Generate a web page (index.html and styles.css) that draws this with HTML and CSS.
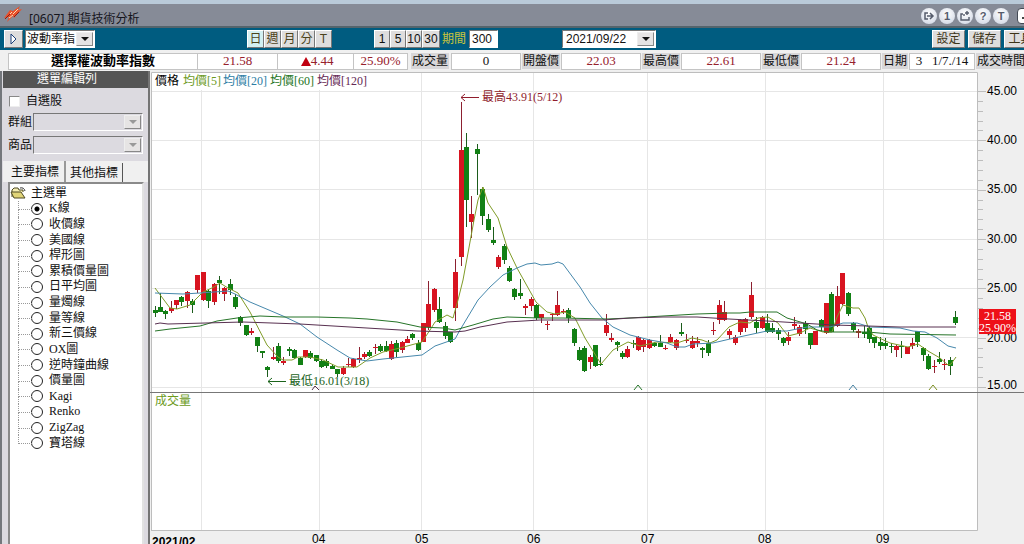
FILE: index.html
```html
<!DOCTYPE html>
<html lang="zh-Hant">
<head>
<meta charset="utf-8">
<title>[0607] 期貨技術分析</title>
<link rel="stylesheet" href="styles.css">
</head>
<body>
<header class="titlebar">
  <svg class="logo" viewBox="0 0 18 16" width="18" height="16" aria-hidden="true">
    <path d="M0 12 6 4 9 5 16 0 14 4 18 3 10 12 9 10 3 16 5 11Z" fill="#e8512c"/>
    <path d="M4 10 8 6M9 8 14 3M5 12 9 9" stroke="#ffd9b0" stroke-width="1" fill="none"/>
    <path d="M1 13 6 8M10 11 15 6" stroke="#8c1c14" stroke-width="1" fill="none"/>
  </svg>
  <h1 class="title">[0607] 期貨技術分析</h1>
  <div class="window-tools">
    <button class="orb" aria-label="匯出"><svg viewBox="0 0 16 16" width="16" height="16"><path d="M7 5H4V11H7M6 8H12M9 5 12 8 9 11" fill="none" stroke="#555c6c" stroke-width="1.5"/></svg></button>
    <button class="orb">1</button>
    <button class="orb" aria-label="新視窗"><svg viewBox="0 0 16 16" width="16" height="16"><path d="M6 6H4V12H12V9M7 6V8M10 3V7M8 5H12" fill="none" stroke="#555c6c" stroke-width="1.4"/></svg></button>
    <button class="orb">?</button>
    <button class="orb">T</button>
    <button class="minimize" aria-label="最小化"><svg viewBox="0 0 14 14" width="14" height="14"><path d="M2 9H9" stroke="#444" stroke-width="2"/></svg></button>
  </div>
</header>

<nav class="toolbar">
  <button class="key play" aria-label="展開"><svg viewBox="0 0 10 12" width="10" height="12"><path d="M2 1 7 6 2 11Z" fill="#fff" stroke="#1c3f78"/></svg></button>
  <span class="combo combo-product"><select aria-label="商品"><option>波動率指</option></select></span>
  <div class="keys periods">
    <button class="key active">日</button><button class="key">週</button><button class="key">月</button><button class="key">分</button><button class="key">T</button>
  </div>
  <div class="keys minutes">
    <button class="key">1</button><button class="key">5</button><button class="key">10</button><button class="key">30</button>
  </div>
  <label class="span-label" for="span">期間</label>
  <input class="span-input" id="span" type="text" value="300">
  <span class="combo combo-date"><select aria-label="日期"><option>2021/09/22</option></select></span>
  <div class="actions">
    <button class="key wide">設定</button><button class="key wide">儲存</button><button class="key wide">工具</button>
  </div>
</nav>

<section class="quote">
  <strong class="cell name">選擇權波動率指數</strong>
  <span class="cell price">21.58</span>
  <span class="cell change"><svg viewBox="0 0 10 9" width="10" height="9" aria-hidden="true"><path d="M5 0 10 9H0Z" fill="#c00010"/></svg>4.44</span>
  <span class="cell percent">25.90%</span>
  <span class="tag first">成交量</span><span class="cell volume">0</span>
  <span class="tag">開盤價</span><span class="cell value">22.03</span>
  <span class="tag">最高價</span><span class="cell value">22.61</span>
  <span class="tag">最低價</span><span class="cell value">21.24</span>
  <span class="tag short">日期</span><span class="cell date">3&nbsp;&nbsp; 1/7./14</span>
  <span class="tag long">成交時間</span>
</section>

<main class="workspace">
  <aside class="sidebar">
    <h2 class="side-title">選單編輯列</h2>
    <div class="filters">
      <label class="check"><input type="checkbox">自選股</label>
      <div class="field"><label for="group">群組</label><span class="combo off"><select id="group" disabled></select></span></div>
      <div class="field"><label for="item">商品</label><span class="combo off"><select id="item" disabled></select></span></div>
    </div>
    <div class="tabs" role="tablist">
      <button class="tab selected" role="tab" aria-selected="true">主要指標</button>
      <button class="tab" role="tab" aria-selected="false">其他指標</button>
    </div>
    <div class="tree">
      <div class="root">
        <svg viewBox="0 0 16 12" width="16" height="12" aria-hidden="true"><path d="M2 10V3L4 1H8L9 3H13V5" fill="#f4edb0" stroke="#4e4a25"/><path d="M1 5H11L15 11H4Z" fill="#e0d478" stroke="#4e4a25"/><path d="M10 1Q14 0 15 4" fill="none" stroke="#333"/></svg>
        主選單
      </div>
      <ul class="items">
        <li><label><input type="radio" name="chart" checked>K線</label></li>
        <li><label><input type="radio" name="chart">收價線</label></li>
        <li><label><input type="radio" name="chart">美國線</label></li>
        <li><label><input type="radio" name="chart">桿形圖</label></li>
        <li><label><input type="radio" name="chart">累積價量圖</label></li>
        <li><label><input type="radio" name="chart">日平均圖</label></li>
        <li><label><input type="radio" name="chart">量燭線</label></li>
        <li><label><input type="radio" name="chart">量等線</label></li>
        <li><label><input type="radio" name="chart">新三價線</label></li>
        <li><label><input type="radio" name="chart">OX圖</label></li>
        <li><label><input type="radio" name="chart">逆時鐘曲線</label></li>
        <li><label><input type="radio" name="chart">價量圖</label></li>
        <li><label><input type="radio" name="chart">Kagi</label></li>
        <li><label><input type="radio" name="chart">Renko</label></li>
        <li><label><input type="radio" name="chart">ZigZag</label></li>
        <li><label><input type="radio" name="chart">寶塔線</label></li>
      </ul>
    </div>
  </aside>

  <section class="chart">
    <svg class="plot" viewBox="150 71 874 473" role="img" aria-label="K線圖">
      <rect x="151" y="72" width="827" height="458" class="paper"/>
      <path class="grid" d="M201.5 90V530M319.5 90V530M421.5 72V530M533.5 72V530M647.5 72V530M765.5 72V530M883.5 72V530M152 91.5H978M152 140.5H978M152 189.5H978M152 239.5H978M152 288.5H978M152 337.5H978M152 387.5H978"/>
      <path class="frame" d="M151.5 530V72.5H977.5V530.5H151"/>
      <path class="ticks" id="ticks"/>
      <g class="axis">
        <text x="987" y="95">45.00</text><text x="987" y="144">40.00</text><text x="987" y="193">35.00</text><text x="987" y="243">30.00</text><text x="987" y="292">25.00</text><text x="987" y="342">20.00</text><text x="987" y="389">15.00</text>
      </g>
      <g id="candles"></g>
      <polyline class="line ma5" points="155,288 170,308 177,309 190,305 203,292 214,287 220,283 228,288 238,293 250,312 267,345 278,357 283,360 292,360 298,357 310,357 323,360 338,367 350,367 357,367 370,358 383,352 400,348 422,342 430,330 435,322 447,315 453,318 458,300 463,280 468,253 474,220 478,200 483,187 488,203 498,218 507,247 517,268 536,302 547,312 555,314 565,312 575,318 585,338 601,364 613,350 628,342 640,346 657,342 677,343 692,338 702,340 710,343 717,340 729,327 740,322 750,323 758,318 768,317 778,323 788,336 800,333 810,328 823,332 832,332 837,317 843,305 853,308 859,308 865,318 868,327 873,335 890,343 908,347 918,344 928,351 940,358 948,365 951,364 956,357"/>
      <polyline class="line ma20" points="155,293 183,294 200,293 228,291 235,294 250,302 283,316 300,324 317,337 337,350 350,358 367,361 383,359 422,355 435,346 455,339 460,330 472,310 478,300 490,287 503,275 517,268 527,264 535,263 541,265 552,264 558,262 563,264 580,287 590,303 602,318 613,327 630,335 650,340 667,343 677,347 685,347 693,344 713,343 730,339 753,334 767,331 787,331 807,327 830,327 843,323 857,323 870,327 900,328 913,331 925,332 937,338 948,346 956,348"/>
      <polyline class="line ma60" points="155,331 170,329 200,326 217,321 237,318 260,316 283,317 317,317 350,318 367,319 397,322 420,327 443,328 455,330 473,325 493,319 507,317 540,318 563,318 607,319 630,318 663,316 697,314 729,313 740,313 750,312 777,312 787,318 807,324 817,330 828,332 868,332 890,334 956,335"/>
      <polyline class="line ma120" points="155,324 160,323 168,324 243,322 300,324 350,327 417,331 455,332 465,331 480,327 507,322 540,320 603,320 630,318 663,317 697,317 729,319 767,321 800,323 833,325 868,326 900,327 956,327"/>
      <path class="split" d="M150 392.5H1024"/>
      <g class="marks">
        <path class="m120" d="M312 390 315 386 319 390"/>
        <path class="m60" d="M634 390 638 385 642 390"/>
        <path class="m20" d="M849 390 853 385 857 390"/>
        <path class="m5" d="M929 390 933 385 937 390"/>
      </g>
      <g class="note high"><path d="M479 97.5H461M465 94 461 97.5 465 101"/><text x="482" y="101">最高43.91(5/12)</text></g>
      <g class="note low"><path d="M286 381.5H268M272 378 268 381.5 272 385"/><text x="289" y="385">最低16.01(3/18)</text></g>
      <g class="legend">
        <text x="155" y="85">價格</text><text x="183" y="85" class="t5">均價[5]</text><text x="223" y="85" class="t20">均價[20]</text><text x="270" y="85" class="t60">均價[60]</text><text x="317" y="85" class="t120">均價[120]</text>
        <text x="155" y="405" class="t5">成交量</text>
      </g>
      <g class="last"><rect x="979" y="309" width="37" height="25"/><text x="984" y="320">21.58</text><text x="979" y="332">25.90%</text></g>
      <g class="months">
        <text x="152" y="546" class="year">2021/02</text><text x="312" y="543">04</text><text x="415" y="543">05</text><text x="527" y="543">06</text><text x="641" y="543">07</text><text x="758" y="543">08</text><text x="876" y="543">09</text>
      </g>
    </svg>
  </section>
</main>
<script src="chart.js"></script>
</body>
</html>
```

FILE: styles.css
```css
* { box-sizing: border-box; }
body {
  margin: 0;
  min-height: 100vh;
  display: flex;
  flex-direction: column;
  overflow: hidden;
  background: #efefef;
  color: #111;
  font: 12px/16px "Liberation Serif", "Noto Sans CJK TC", serif;
}
button, select, input { font: inherit; color: inherit; margin: 0; }
h1, h2 { margin: 0; font-size: 12px; font-weight: 400; }

/* Title bar */
.titlebar {
  display: flex;
  align-items: center;
  height: 28px;
  padding-left: 4px;
  border-top: 4px solid #b9cad9;
  border-bottom: 2px solid #54646c;
  background: #868b97;
}
.logo { align-self: flex-start; margin-top: 2px; }
.title {
  margin: 8px 0 0 7px;
  font-family: "Noto Sans", "Noto Sans CJK TC", sans-serif;
  line-height: 16px;
  color: #15151c;
}
.window-tools { display: flex; align-items: center; gap: 2px; margin: 2px -14px 0 auto; }
.orb {
  display: grid;
  place-items: center;
  width: 16px;
  height: 16px;
  padding: 0;
  border: 0;
  border-radius: 50%;
  background: radial-gradient(circle at 50% 35%, #fff, #d5dbe7 80%);
  color: #555c6c;
  font: bold 11px/16px "Liberation Sans", sans-serif;
}
.minimize {
  width: 21px;
  height: 16px;
  margin-left: 6px;
  padding: 0 0 0 2px;
  border: 1px solid #444a55;
  border-radius: 4px;
  background: #fff;
  text-align: left;
}
.minimize svg { display: block; }

/* Toolbar */
.toolbar {
  display: flex;
  align-items: center;
  height: 22px;
  padding-left: 4px;
  background: #005c80;
  font-family: "Liberation Sans", "Noto Sans CJK TC", sans-serif;
}
.key {
  display: grid;
  place-items: center;
  width: 17px;
  height: 18px;
  padding: 0;
  border: 1px solid;
  border-color: #fff #777 #777 #fff;
  background: #dedddd;
  line-height: 14px;
}
.play { width: 19px; }
.keys, .actions { display: flex; flex: none; }
.periods { margin-left: 152px; color: #4c431b; }
.minutes { margin-left: 42px; }
.minutes .key { width: 16px; }
.minutes .key:last-child { width: 18px; }
.active { background: #d3f0f2; }
.wide { width: 33px; color: #3c3418; }
.actions { gap: 3px; margin: 0 -13px 0 auto; }
.combo {
  position: relative;
  display: block;
  height: 18px;
  border: 1px solid;
  border-color: #777 #fff #fff #777;
  background: #fff;
}
.combo select {
  display: block;
  width: 100%;
  height: 16px;
  padding: 0 0 0 3px;
  border: 0;
  appearance: none;
  background: transparent;
  line-height: 16px;
}
.combo::before {
  content: "";
  position: absolute;
  inset: 1px 1px 1px auto;
  width: 15px;
  border: 1px solid;
  border-color: #eee #888 #888 #eee;
  background: #e6e4e4;
  pointer-events: none;
}
.combo::after {
  content: "";
  position: absolute;
  right: 5px;
  top: 6px;
  border: 4px solid transparent;
  border-top-color: #111;
  border-bottom: 0;
  pointer-events: none;
}
.combo-product { width: 70px; margin-left: 2px; }
.combo-product select { padding-left: 1px; }
.combo-date { width: 94px; margin-left: 64px; }
.span-label { margin-left: 2px; color: #c9c43c; }
.span-input {
  width: 29px;
  height: 18px;
  margin-left: 3px;
  padding: 0 0 0 2px;
  border: 1px solid;
  border-color: #777 #fff #fff #777;
  background: #fff;
}

/* Quote strip */
.quote {
  display: flex;
  align-items: center;
  height: 21px;
  padding: 1px 0 0 8px;
  background: #f0f0f0;
  white-space: nowrap;
}
.cell {
  display: flex;
  flex: none;
  justify-content: center;
  align-items: center;
  height: 17px;
  border: 1px solid #c4c4c4;
  border-left-width: 0;
  background: #fff;
  font-size: 13px;
  color: #96202c;
}
.name { width: 190px; border-left-width: 1px; color: #000; }
.price { width: 80px; }
.change { width: 76px; padding-left: 3px; }
.percent { width: 54px; }
.volume { width: 70px; color: #111; }
.value { width: 80px; }
.date { width: 66px; color: #111; }
.volume, .value, .date { border-left-width: 1px; }
.tag {
  flex: none;
  width: 38px;
  height: 16px;
  margin: 0 1px;
  background: #d8d7d9;
  text-align: center;
}
.tag.first { margin-left: 3px; margin-right: 2px; }
.short { width: 26px; }
.long { width: 50px; }

/* Sidebar */
.workspace { display: flex; flex: 1; }
.sidebar {
  display: flex;
  flex-direction: column;
  flex: none;
  width: 150px;
  padding-left: 1px;
  border-left: 2px solid #74777c;
  border-right: 2px solid #747474;
  background: #dcdae0;
}
.side-title {
  height: 17px;
  padding-right: 17px;
  background: #555;
  color: #fff;
  line-height: 17px;
  text-align: center;
}
.filters { padding: 5px 5px 7px; }
.check { display: flex; align-items: center; gap: 6px; height: 16px; }
.check input {
  width: 11px;
  height: 11px;
  margin: 0 0 0 1px;
  border: 1px solid;
  border-color: #888 #eee #eee #888;
  appearance: none;
  background: #fff;
}
.field { display: flex; align-items: center; margin-top: 4px; }
.field + .field { margin-top: 5px; }
.off { flex: 1; margin-left: 1px; background: #dcdae0; }
.off::after { border-top-color: #999; }
.tabs { display: flex; align-items: flex-end; height: 21px; background: #f0f0f0; }
.tab {
  height: 19px;
  padding: 0 4px;
  border: 0;
  border-right: 1px solid #555;
  background: #f0f0f0;
  line-height: 18px;
}
.selected { height: 21px; padding: 0 5px 0 8px; border-right-width: 2px; border-right-color: #999; }
.tree {
  flex: 1;
  margin: 0 4px 0 5px;
  border: 2px solid #8a8a8a;
  border-right-color: #e2e2e2;
  border-bottom: 0;
  background: #fff;
}
.root { display: flex; align-items: center; gap: 5px; height: 17px; }
.items {
  display: grid;
  grid-auto-rows: 1fr;
  height: 250px;
  margin: 0;
  padding: 0;
  list-style: none;
}
.items li { position: relative; display: flex; align-items: center; padding-left: 21px; }
.items li::before {
  content: "";
  position: absolute;
  left: 8px;
  top: 0;
  height: 50%;
  width: 13px;
  border: 1px dotted #999;
  border-width: 0 0 1px 1px;
}
.items li:not(:last-child)::after {
  content: "";
  position: absolute;
  left: 8px;
  top: 50%;
  height: 50%;
  border-left: 1px dotted #999;
}
.items label { display: flex; align-items: center; gap: 6px; line-height: 15px; }
.items input {
  width: 12px;
  height: 12px;
  border: 1px solid #222;
  border-radius: 50%;
  appearance: none;
  background: #fff;
}
.items input:checked { background: radial-gradient(circle, #000 2px, #fff 3px); }

/* Chart */
.chart { flex: 1; min-width: 0; }
.plot { display: block; width: 100%; }
.paper { fill: #fff; }
.grid { fill: none; stroke: #e6e6e6; }
.frame, .ticks { fill: none; stroke: #bdbdbd; }
.split { stroke: #777; }
.line { fill: none; stroke-width: 1; }
.ma5 { stroke: #809c28; }
.ma20 { stroke: #4688ac; }
.ma60 { stroke: #267428; }
.ma120 { stroke: #583050; }
.up { fill: #d81420; }
.up-wick { fill: #8c2030; }
.down { fill: #128014; }
.down-wick { fill: #1c5c1c; }
.marks path { fill: none; }
.m5 { stroke: #7a8c20; }
.m20 { stroke: #4680a0; }
.m60 { stroke: #267428; }
.m120 { stroke: #583050; }
.note path { fill: none; }
.high path { stroke: #901c2c; }
.high text { fill: #901c2c; }
.low path { stroke: #1c641c; }
.low text { fill: #1c641c; }
.t5 { fill: #6c9a1c; }
.t20 { fill: #2c7ca4; }
.t60 { fill: #1c741c; }
.t120 { fill: #642854; }
.axis, .months { font-family: "Liberation Sans", sans-serif; }
.year { font-weight: 700; }
.last rect { fill: #ee1018; }
.last text { fill: #fff; }
```

FILE: chart.js
```js
// Each candle: direction, high, low, body top, body bottom, in thirds of a unit below y = 240.
const candles = `
G,197,231,209,218 G,160,216,201,216 G,209,238,213,222 R,184,218,204,212 R,180,207,180,195
G,168,198,171,186 R,153,204,155,183 G,178,218,183,195 R,104,158,105,150 R,96,182,96,180
G,148,204,153,183 R,130,196,131,186 G,107,162,120,130 R,140,182,145,162 G,117,165,132,150
G,162,208,171,201 G,227,257,231,248 G,254,287,256,284 R,264,284,272,280 G,291,335,291,318
G,333,353,333,339 G,378,411,380,391 R,320,360,350,357 G,309,368,317,362 R,352,375,362,368
G,321,348,327,334 G,328,356,330,353 G,350,375,354,374 R,330,353,330,352 G,334,356,339,353
G,344,366,346,363 G,358,383,363,380 G,358,383,362,377 G,371,388,377,386 G,388,410,388,402
R,378,405,383,402 R,353,380,371,375 R,355,385,358,382 R,320,368,354,360 R,337,358,342,352
G,330,350,335,348 R,312,342,321,325 G,312,335,318,332 G,303,335,318,333 R,303,360,312,357
G,300,350,309,335 R,303,340,306,329 R,288,310,297,308 G,279,299,283,294 G,300,332,309,329
R,250,306,250,305 R,124,270,192,262 R,144,215,146,209 G,171,248,207,247 G,247,296,258,288
G,275,308,277,305 R,58,242,96,204 R,-415,78,-270,51 G,-320,-38,-279,-120 R,-132,-6,-78,-54
G,-287,-135,-273,-259 G,-160,-45,-153,-72 G,-79,-24,-63,-31 G,-38,16,0,9 R,45,87,51,80
G,13,71,17,60 G,79,127,85,122 G,143,180,148,172 G,117,177,158,168 R,193,224,199,203
R,171,212,177,198 G,193,240,195,235 R,222,250,222,234 R,243,271,251,255 R,218,243,221,224
R,153,228,195,225 R,206,222,213,217 G,204,250,210,235 G,265,318,266,309 G,321,363,330,360
G,318,395,324,393 R,346,387,351,365 G,315,380,316,378 G,352,377,371,376 R,221,288,256,279
R,280,305,295,299 G,303,334,306,314 G,333,356,339,350 R,318,353,327,350 G,300,325,309,312
R,288,334,291,330 R,297,335,300,321 R,297,327,300,324 G,306,322,309,319 G,286,322,308,320
R,314,330,324,327 R,283,310,291,306 R,298,330,300,325 G,248,288,276,282 R,283,310,300,304
R,289,328,303,324 R,291,322,304,308 G,322,353,325,329 G,301,347,308,338 R,247,284,269,273
R,180,252,195,240 R,183,244,216,241 R,268,298,273,286 R,286,315,291,308 R,237,284,240,276
R,235,276,238,264 R,125,236,166,230 G,231,279,246,263 R,228,267,232,265 G,222,278,249,276
G,250,278,264,276 G,264,300,270,282 G,291,318,295,310 R,277,314,291,303 R,231,270,253,257
R,255,289,261,282 G,243,282,249,267 G,279,326,279,315 R,272,315,274,315 G,236,276,240,261
R,190,283,190,279 G,157,276,163,275 R,137,262,168,257 R,99,195,99,192 G,157,227,160,221
G,246,276,249,270 R,268,293,272,279 G,258,293,277,282 G,257,308,264,296 G,291,323,292,308
G,292,330,306,317 G,294,327,308,318 G,308,338,317,322 R,315,350,318,330 G,303,353,319,322
R,322,342,322,341 R,294,327,310,318 G,272,322,274,306 G,320,363,324,344 G,342,390,348,388
R,360,400,377,381 G,336,371,357,367 R,357,390,371,375 G,352,405,360,379 G,213,255,231,248
`.trim().split(/\s+/).map(row => row.split(","));

const NS = "http://www.w3.org/2000/svg";
const layer = document.getElementById("candles");
const step = 800.5 / (candles.length - 1);
const toY = v => Math.round(240 + v / 3);

function bar(cls, x, top, bottom, width) {
  const rect = document.createElementNS(NS, "rect");
  rect.setAttribute("class", cls);
  rect.setAttribute("x", x);
  rect.setAttribute("y", top);
  rect.setAttribute("width", width);
  rect.setAttribute("height", Math.max(1, bottom - top));
  layer.appendChild(rect);
}

candles.forEach(([dir, high, low, top, bottom], i) => {
  const x = Math.floor(155 + i * step);
  const cls = dir === "R" ? "up" : "down";
  bar(cls + "-wick", x, toY(+high), toY(+low), 1);
  bar(cls, x - 2, toY(+top), toY(+bottom), 5);
});

// Price scale: a long tick every 5 points, a short one for each point between.
let path = "";
for (let i = 0; i <= 30; i++) {
  const y = Math.round(91 + i * 9.87) + 0.5;
  path += `M978 ${y}h${i % 5 === 0 ? 8 : 5}`;
}
document.getElementById("ticks").setAttribute("d", path);
```
